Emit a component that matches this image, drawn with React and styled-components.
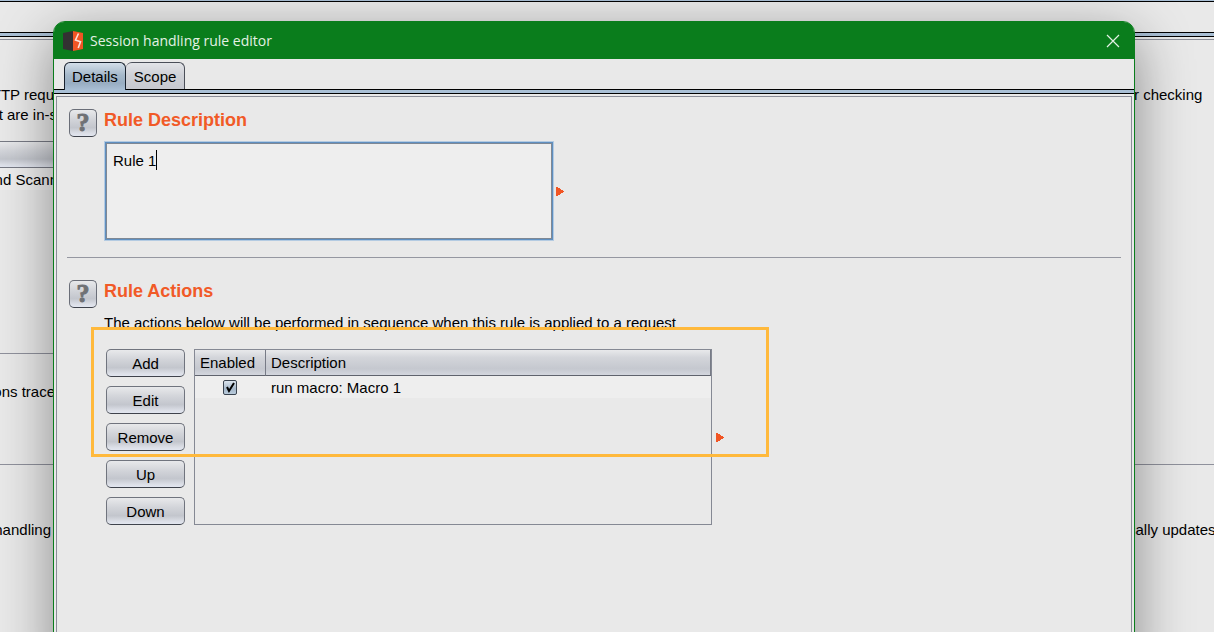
import React, { useState } from "react";
import styled, { createGlobalStyle, css } from "styled-components";

const GlobalStyle = createGlobalStyle`
  * { box-sizing: border-box; }
  body {
    margin: 0;
    background: #e9e9e9;
    color: #000;
    font: 15px/20px "Liberation Sans", Arial, sans-serif;
  }
`;

const metal = "linear-gradient(#e8e9eb, #d3d5da 35%, #c3c6cd 68%, #dcdfe7 90%, #e2e6f0)";

const Page = styled.main`
  position: relative;
  display: flex;
  flex-direction: column;
  height: 100vh;
  overflow: hidden;
`;

const Stripe = styled.div`
  height: 5px;
  flex: none;
  border: solid #000;
  border-width: 1px 0;
  background: #a9bfd5;
`;

const WindowTop = styled.div`
  height: 32px;
  flex: none;
  border-top: 1px solid #a9bfd5;
  box-shadow: inset 0 1px #000;
`;

const Backdrop = styled.div`
  flex: 1;
  margin-top: 2px;
  border-top: 1px solid #8b8d98;
`;

const BackSection = styled.section`
  height: ${(p) => p.$height}px;
  padding-top: ${(p) => p.$top}px;
`;

const BackRule = styled.hr`
  width: ${(p) => p.$width || "100%"};
  margin: 0;
  border: 0;
  border-top: 1px solid #8f919c;
`;

const BackLine = styled.div`
  display: flex;
  justify-content: space-between;
  height: 20px;
  white-space: nowrap;
`;

const LeftText = styled.span`
  display: flex;
  justify-content: flex-end;
  width: ${(p) => p.$width || 54}px;
`;

const RightText = styled.span`
  width: ${(p) => p.$width || 80}px;
`;

const BackTable = styled.div`
  width: 50%;
  margin-top: 16px;
`;

const BackHeader = styled.div`
  height: 27px;
  border: solid #777a84;
  border-width: 1px 0;
  background: ${metal};
`;

const BackRow = styled.div`
  display: flex;
  align-items: center;
  height: 22px;
  padding-top: 2px;
  background: #eee;
  white-space: nowrap;
`;

const Dialog = styled.div`
  position: absolute;
  inset: 21px 79px -40px 53px;
  display: flex;
  flex-direction: column;
  border: 1px solid #0a7d1c;
  border-radius: 12px 12px 0 0;
  background: #e9e9e9;
  box-shadow: 0 16px 56px rgba(0, 0, 0, 0.42);
`;

const TitleBar = styled.header`
  display: flex;
  align-items: center;
  gap: 7px;
  height: 37px;
  flex: none;
  padding: 0 14px 0 9px;
  border-radius: 10px 10px 0 0;
  background: #0a7d1c;
`;

const Title = styled.h1`
  flex: 1;
  margin: 0;
  color: #e4f1e5;
  font: 400 14px/20px "Open Sans", "Noto Sans", sans-serif;
`;

const CloseButton = styled.button`
  display: flex;
  padding: 0;
  border: 0;
  background: none;
  color: #e4f1e5;
`;

const Tabs = styled.div`
  display: flex;
  height: 30px;
  flex: none;
  padding: 3px 0 0 10px;
`;

const Tab = styled.button`
  height: 28px;
  padding: 0 8px;
  border: 1px solid #4b4f59;
  border-left: 0;
  border-bottom: 0;
  border-radius: 6px 6px 0 0;
  background: linear-gradient(#e3e4e8, #cfd1d7 45%, #c6c8cf);
  color: #000;
  font: inherit;
  white-space: nowrap;
  ${(p) =>
    p.$active &&
    css`
      z-index: 1;
      padding: 0 7px;
      border-color: #18212e;
      border-left: 1px solid #18212e;
      background: linear-gradient(#d3dee9, #a5b8ca 45%, #98adc2 75%, #a9bfd5);
    `}
`;

const Panel = styled.div`
  flex: 1;
  margin: 2px 2px 0;
  padding: 12px 10px 0;
  border: 1px solid #8b8d98;
`;

const Section = styled.section`
  display: grid;
  grid-template-columns: 28px 1fr;
  gap: 7px;
  padding: 0 2px;
`;

const Help = styled.button`
  width: 28px;
  height: 28px;
  padding: 0;
  border: 1px solid #6a6e78;
  border-bottom-color: #3f434c;
  border-radius: 5px;
  background: ${metal};
  color: #6f7175;
  font: 700 26px/24px "Liberation Serif", serif;
  -webkit-text-stroke: 1px #6f7175;
`;

const Heading = styled.h2`
  margin: 0;
  color: #f15a27;
  font: 700 18px/22px "Liberation Sans", Arial, sans-serif;
`;

const WithArrow = styled.div`
  display: flex;
  align-items: center;
  gap: ${(p) => p.$gap}px;
`;

const DescriptionRow = styled(WithArrow)`
  padding: 11px 0 0 1px;
`;

const TextFrame = styled.div`
  position: relative;
  display: flex;
  width: 448px;
  height: 98px;
  border: 1px solid #5f8fc0;
  box-shadow: 0 0 0 1px #b4cbe2, inset 0 0 0 1px #7f8894;
`;

const Description = styled.textarea`
  flex: 1;
  margin: 1px;
  padding: 7px 6px;
  border: 0;
  outline: 0;
  resize: none;
  background: #eee;
  color: #000;
  font: inherit;
`;

const Caret = styled.span`
  position: absolute;
  top: 7px;
  left: 50px;
  width: 1px;
  height: 20px;
  background: #000;
`;

const Rule = styled.hr`
  margin: 17px 0 22px;
  border: 0;
  border-top: 1px solid #9597a1;
`;

const Note = styled.p`
  margin: 11px 0 16px;
`;

const Actions = styled.div`
  position: relative;
  display: flex;
  gap: 9px;
  padding-left: 2px;
`;

const ButtonColumn = styled.div`
  display: flex;
  flex-direction: column;
  gap: 9px;
  width: 79px;
`;

const ActionButton = styled.button`
  height: 28px;
  padding: 1px 0 0;
  border: 1px solid #70747e;
  border-bottom-color: #3f434c;
  border-radius: 5px;
  background: ${metal};
  color: #000;
  font: inherit;
`;

const TableFrame = styled.div`
  width: 518px;
  height: 176px;
  border: 1px solid #858994;
`;

const Table = styled.table`
  width: 100%;
  border-collapse: separate;
  border-spacing: 0;
  table-layout: fixed;
`;

const HeadCell = styled.th`
  width: ${(p) => p.$width || "auto"};
  height: 26px;
  padding: 0 5px;
  border-bottom: 1px solid #5f636d;
  border-right: 1px solid #777b86;
  background: linear-gradient(#e8e9eb, #d3d5da 30%, #c5c8cf 75%, #d3d6de);
  font-weight: 400;
  text-align: left;
`;

const Cell = styled.td`
  height: 22px;
  padding: 2px 5px 0;
  background: #eee;
  line-height: 20px;
`;

const CheckCell = styled(Cell)`
  padding: 2px 6px 0 4px;
  text-align: center;
`;

const CheckLabel = styled.label`
  display: inline-grid;
  vertical-align: top;
  margin-top: 2px;
  > * { grid-area: 1 / 1; }
`;

const Check = styled.input`
  width: 14px;
  height: 15px;
  margin: 0;
  appearance: none;
  border: 1px solid #39434f;
  border-radius: 2px;
  background: linear-gradient(#dce5ee, #a4b7ca 60%, #b9cbdc);
  &:not(:checked) + svg { display: none; }
`;

const Highlight = styled.div`
  position: absolute;
  top: -22px;
  left: -13px;
  width: 678px;
  height: 130px;
  border: 3px solid #ffb93c;
  pointer-events: none;
`;

const Logo = () => (
  <svg width="20" height="20" viewBox="0 0 20 20" aria-hidden="true">
    <path d="M0 2 10 0v20L0 18z" fill="#333132" />
    <path d="M10 0 20 2v16l-10 2z" fill="#f15524" />
    <path d="M15.5 2.5 12.5 9l5 1.8-2.3 6.2" fill="none" stroke="#fbe3da" strokeWidth="1.6" />
  </svg>
);

const Arrow = () => (
  <svg width="8" height="9" viewBox="0 0 8 9" aria-hidden="true">
    <path d="M0 0h2v1h2v1h1v1h2v1h1v1H7v1H5v1H4v1H2v1H0z" fill="#f15524" />
  </svg>
);

const BUTTONS = ["Add", "Edit", "Remove", "Up", "Down"];

export default function App() {
  const [text, setText] = useState("Rule 1");
  const [enabled, setEnabled] = useState(true);

  return (
    <Page>
      <GlobalStyle />
      <WindowTop />
      <Stripe />
      <Backdrop>
        <BackSection $height={313} $top={45}>
          <BackLine>
            <LeftText>TTP requ</LeftText>
            <RightText>r checking</RightText>
          </BackLine>
          <BackLine>
            <LeftText $width={57}>t are in-s</LeftText>
          </BackLine>
          <BackTable>
            <BackHeader />
            <BackRow>
              <LeftText $width={58}>nd Scann</LeftText>
            </BackRow>
          </BackTable>
        </BackSection>
        <BackRule $width="50%" />
        <BackSection $height={110} $top={28}>
          <BackLine>
            <LeftText $width={55}>ons trace</LeftText>
          </BackLine>
        </BackSection>
        <BackRule />
        <BackSection $height={160} $top={55}>
          <BackLine>
            <LeftText $width={51}>handling</LeftText>
            <RightText $width={86}>cally updates</RightText>
          </BackLine>
        </BackSection>
      </Backdrop>

      <Dialog role="dialog" aria-labelledby="dialog-title">
        <TitleBar>
          <Logo />
          <Title id="dialog-title">Session handling rule editor</Title>
          <CloseButton aria-label="Close">
            <svg width="14" height="14" viewBox="0 0 14 14" aria-hidden="true">
              <path d="m1 1 12 12M13 1 1 13" stroke="currentColor" strokeWidth="1.2" />
            </svg>
          </CloseButton>
        </TitleBar>
        <Tabs role="tablist">
          <Tab role="tab" aria-selected="true" $active>Details</Tab>
          <Tab role="tab" aria-selected="false">Scope</Tab>
        </Tabs>
        <Stripe />
        <Panel>
          <Section>
            <Help aria-label="Help on rule description">?</Help>
            <div>
              <Heading id="description-heading">Rule Description</Heading>
              <DescriptionRow $gap={3}>
                <TextFrame>
                  <Description
                    aria-labelledby="description-heading"
                    value={text}
                    onChange={(e) => setText(e.target.value)}
                  />
                  <Caret />
                </TextFrame>
                <Arrow />
              </DescriptionRow>
            </div>
          </Section>
          <Rule />
          <Section>
            <Help aria-label="Help on rule actions">?</Help>
            <div>
              <Heading>Rule Actions</Heading>
              <Note>The actions below will be performed in sequence when this rule is applied to a request</Note>
              <Actions>
                <ButtonColumn>
                  {BUTTONS.map((name) => (
                    <ActionButton key={name}>{name}</ActionButton>
                  ))}
                </ButtonColumn>
                <WithArrow $gap={4}>
                  <TableFrame>
                    <Table>
                      <thead>
                        <tr>
                          <HeadCell $width="71px">Enabled</HeadCell>
                          <HeadCell>Description</HeadCell>
                        </tr>
                      </thead>
                      <tbody>
                        <tr>
                          <CheckCell>
                            <CheckLabel>
                              <Check
                                type="checkbox"
                                aria-label="Enabled"
                                checked={enabled}
                                onChange={(e) => setEnabled(e.target.checked)}
                              />
                              <svg width="14" height="15" viewBox="0 0 14 15" aria-hidden="true">
                                <path d="m4 7 2 4 5-8" fill="none" stroke="#000" strokeWidth="2" />
                              </svg>
                            </CheckLabel>
                          </CheckCell>
                          <Cell>run macro: Macro 1</Cell>
                        </tr>
                      </tbody>
                    </Table>
                  </TableFrame>
                  <Arrow />
                </WithArrow>
                <Highlight />
              </Actions>
            </div>
          </Section>
        </Panel>
      </Dialog>
    </Page>
  );
}
